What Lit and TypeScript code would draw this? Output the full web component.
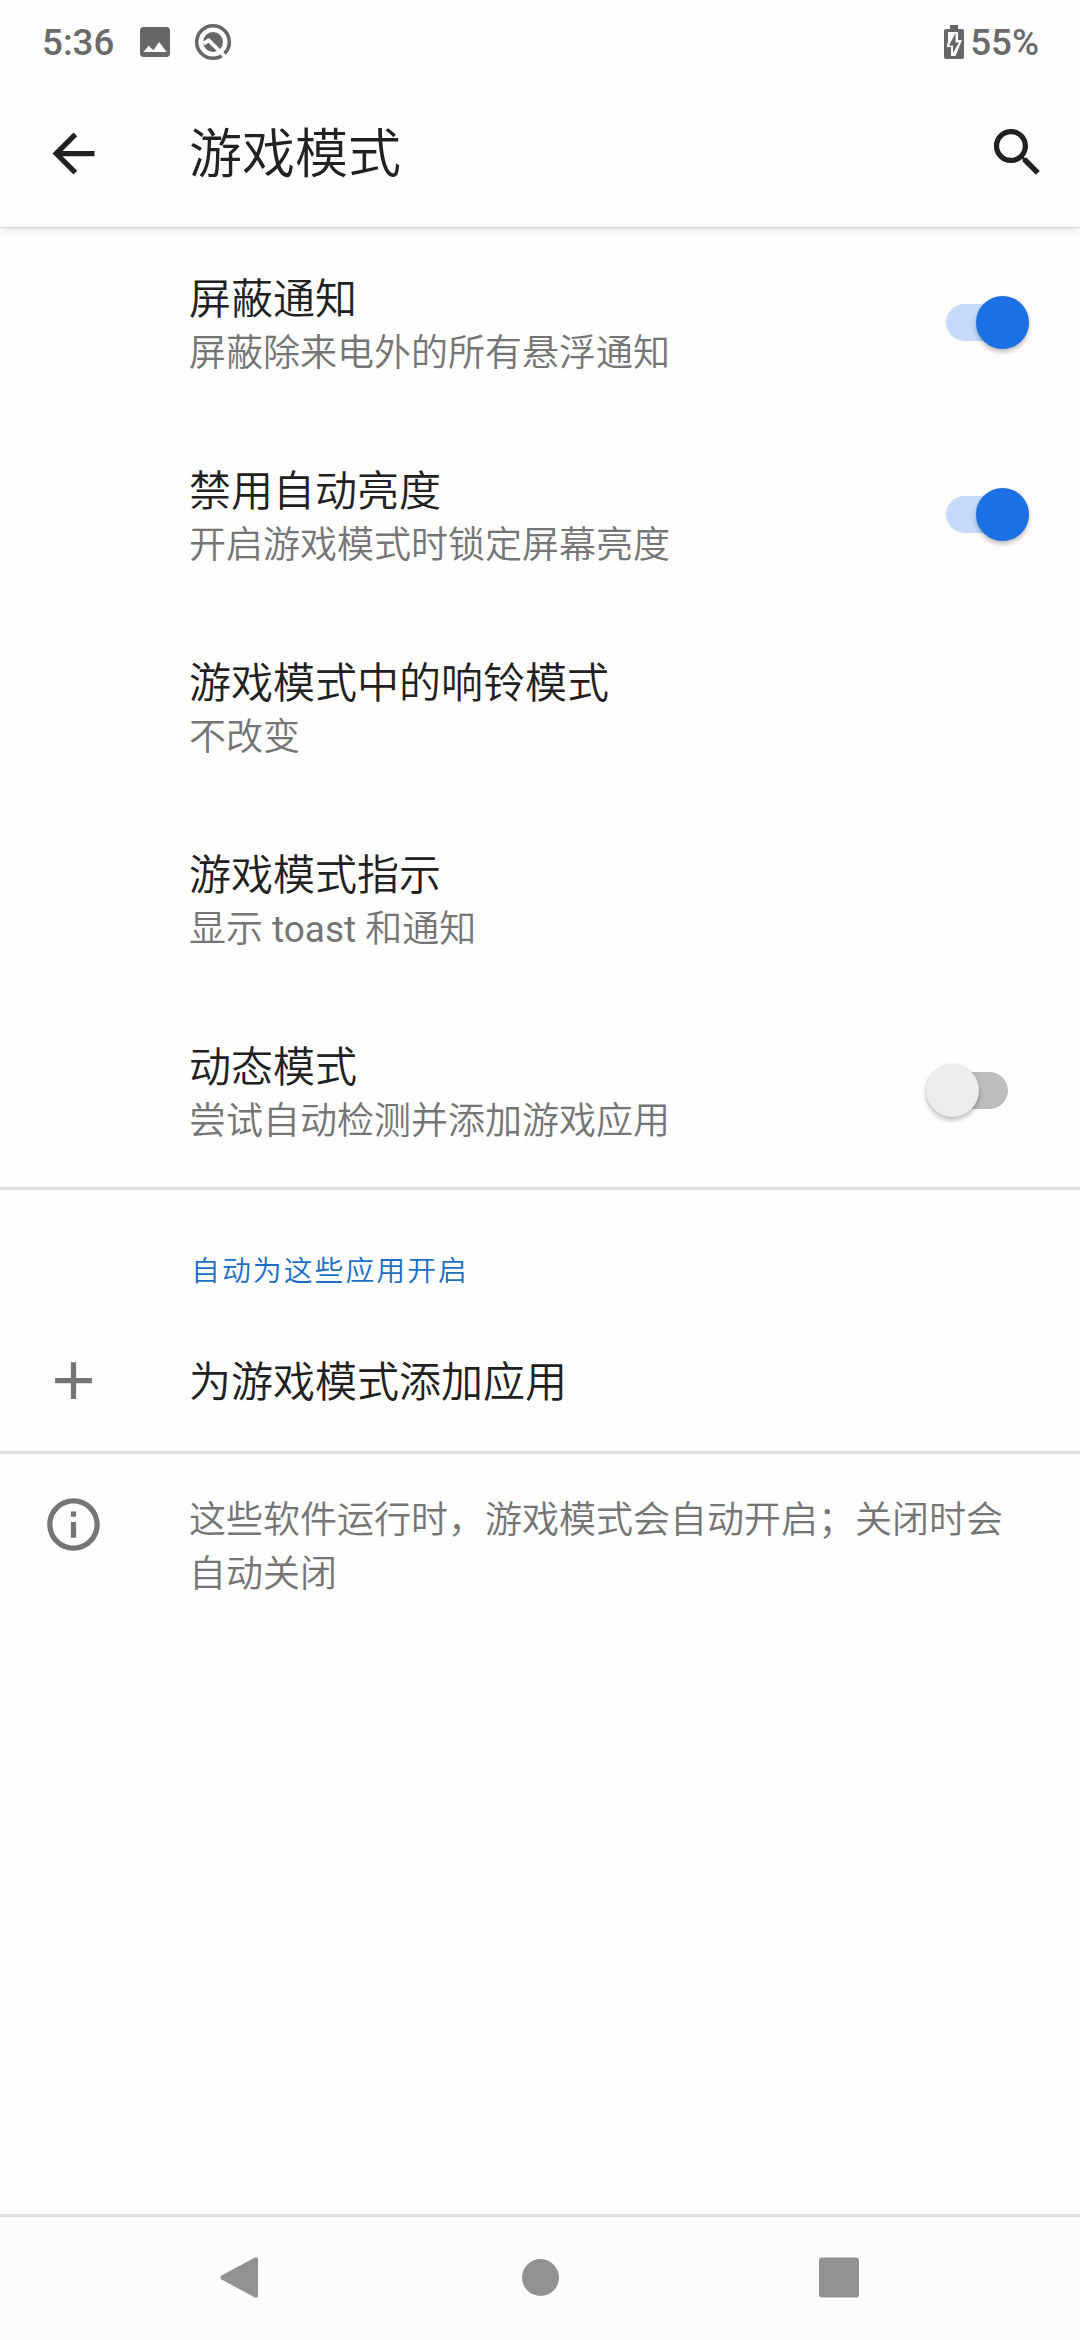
import { LitElement, html, css, svg } from "lit";
import { customElement, property } from "lit/decorators.js";

const FONT = css`Roboto, "Noto Sans CJK SC", sans-serif`;

@customElement("toggle-switch")
class ToggleSwitch extends LitElement {
  @property({ type: Boolean, reflect: true }) on = false;

  static styles = css`
    :host {
      display: flex;
      align-items: center;
      justify-content: flex-start;
      width: 62px;
      height: 37px;
      margin-bottom: 2px;
      border-radius: 19px;
      background: #bdbdbd;
    }
    :host([on]) {
      background: #c6dafb;
      justify-content: flex-end;
    }
    .thumb {
      flex: none;
      width: 53px;
      height: 53px;
      border-radius: 50%;
      background: #ececec;
      margin: 0 -20.5px;
      box-shadow: 0 3px 5px rgba(0, 0, 0, 0.26), 0 0 2px rgba(0, 0, 0, 0.08);
    }
    :host([on]) .thumb {
      background: #1b70e5;
    }
  `;

  render() {
    return html`<span class="thumb"></span>`;
  }
}

@customElement("setting-row")
class SettingRow extends LitElement {
  @property() heading = "";
  @property() summary = "";
  @property() toggle = "";

  static styles = css`
    :host {
      display: flex;
      align-items: center;
      box-sizing: border-box;
      height: 192px;
      padding: 0 72px 0 189px;
      font-family: ${FONT};
      font-weight: 350;
    }
    .text {
      flex: 1;
      padding-top: 6px;
    }
    .heading {
      font-size: 42px;
      line-height: 54px;
      color: #212121;
    }
    .summary {
      font-size: 37px;
      line-height: 53px;
      color: #757575;
    }
    .latin {
      font-weight: 400;
    }
  `;

  render() {
    // Latin words are set one step heavier than the Chinese around them.
    const parts = this.summary.split(/([A-Za-z]+)/);
    return html`
      <div class="text">
        <div class="heading">${this.heading}</div>
        <div class="summary">${parts.map((p, i) => (i % 2 ? html`<span class="latin">${p}</span>` : p))}</div>
      </div>
      ${this.toggle ? html`<toggle-switch ?on=${this.toggle === "on"}></toggle-switch>` : ""}
    `;
  }
}

const rows = [
  { heading: "屏蔽通知", summary: "屏蔽除来电外的所有悬浮通知", toggle: "on" },
  { heading: "禁用自动亮度", summary: "开启游戏模式时锁定屏幕亮度", toggle: "on" },
  { heading: "游戏模式中的响铃模式", summary: "不改变", toggle: "" },
  { heading: "游戏模式指示", summary: "显示 toast 和通知", toggle: "" },
  { heading: "动态模式", summary: "尝试自动检测并添加游戏应用", toggle: "off" },
];

const icon = (d: string) => html`<svg class="icon" viewBox="0 0 24 24">${svg`<path d=${d} />`}</svg>`;

const BACK = "M20 11H7.83l5.59-5.59L12 4l-8 8 8 8 1.41-1.41L7.83 13H20v-2z";
const SEARCH =
  "M15.5 14h-.79l-.28-.27C15.41 12.59 16 11.11 16 9.5 16 5.91 13.09 3 9.5 3S3 5.91 3 9.5 5.91 16 9.5 16c1.61 0 3.09-.59 4.23-1.57l.27.28v.79l5 4.99L20.49 19l-4.99-5zm-6 0C7.01 14 5 11.99 5 9.5S7.01 5 9.5 5 14 7.01 14 9.5 11.99 14 9.5 14z";
const PLUS = "M19 13h-6v6h-2v-6H5v-2h6V5h2v6h6v2z";
const INFO =
  "M11 17h2v-6h-2v6zm1-15C6.48 2 2 6.48 2 12s4.48 10 10 10 10-4.48 10-10S17.52 2 12 2zm0 18c-4.41 0-8-3.59-8-8s3.59-8 8-8 8 3.59 8 8-3.59 8-8 8zM11 9h2V7h-2v2z";

@customElement("app-root")
class AppRoot extends LitElement {
  static styles = css`
    :host {
      display: flex;
      flex-direction: column;
      width: 1080px;
      height: 2340px;
      overflow: hidden;
      background: #fefefe;
      font-family: ${FONT};
      font-weight: 350;
      color: #212121;
    }
    .icon {
      display: block;
      flex: none;
      width: 63px;
      height: 63px;
      fill: currentColor;
    }
    .header {
      height: 227px;
      flex: none;
      box-shadow: 0 1px 1px rgba(0, 0, 0, 0.1), 0 3px 10px rgba(0, 0, 0, 0.1);
    }
    .status {
      display: flex;
      align-items: center;
      box-sizing: border-box;
      height: 84px;
      padding: 0 41px 0 42px;
      font-size: 36.75px;
      font-weight: 500;
      line-height: 43px;
      color: #6a6a6a;
    }
    .photo {
      width: 30px;
      height: 30px;
      margin-left: 26px;
    }
    .quick {
      width: 38px;
      height: 38px;
      margin-left: 24px;
    }
    .spacer {
      flex: 1;
    }
    .battery {
      width: 20px;
      height: 34px;
      margin-right: 6px;
    }
    .appbar {
      display: flex;
      align-items: center;
      box-sizing: border-box;
      height: 138px;
      padding: 0 31px 0 42px;
    }
    .search {
      padding-bottom: 2px;
    }
    .title {
      flex: 1;
      padding: 3px 0 0 84px;
      font-size: 53px;
      line-height: 66px;
    }
    .divider {
      flex: none;
      height: 3px;
      background: #e0e0e0;
    }
    .category {
      box-sizing: border-box;
      height: 120px;
      padding: 59px 0 0 191px;
      font-size: 28.875px;
      line-height: 44px;
      letter-spacing: 2.02px;
      color: #1a6fc4;
    }
    .add {
      display: flex;
      align-items: center;
      gap: 84px;
      box-sizing: border-box;
      height: 141px;
      padding-left: 42px;
      font-size: 42px;
      line-height: 54px;
    }
    .label {
      padding-top: 4px;
    }
    .gray {
      color: #757575;
    }
    .footer {
      display: flex;
      gap: 84px;
      padding: 39px 63px 0 42px;
      color: #757575;
      font-size: 37px;
      line-height: 54px;
    }
    .note {
      width: 828px;
      padding-top: 1px;
    }
    .nav {
      display: flex;
      box-sizing: border-box;
      height: 126px;
      padding-bottom: 2px;
      border-top: 3px solid #e0e0e0;
      background: #fcfcfc;
      align-items: center;
      justify-content: center;
      gap: 236px;
    }
    .nav svg {
      width: 63px;
      height: 63px;
      fill: #929292;
    }
  `;

  render() {
    return html`
      <div class="header">
        <div class="status">
          <span>5:36</span>
          <svg class="photo" viewBox="3 3 18 18" fill="#676767">
            <path d="M21 19V5c0-1.100-.9-2-2-2H5c-1.100 0-2 .9-2 2v14c0 1.100.9 2 2 2h14c1.100 0 2-.9 2-2zM8.500 14.500l2.500 2.500L14.500 12l4.500 6H5l3.500-4z" />
          </svg>
          <svg class="quick" viewBox="0 0 38 38">
            <circle cx="19" cy="19" r="16.300" fill="none" stroke="#676767" stroke-width="3.600" />
            <circle cx="19" cy="19" r="10" fill="#676767" />
            <path d="M9.500 20.500L14.800 17.300L31.500 34" fill="none" stroke="#fefefe" stroke-width="3.800" />
          </svg>
          <span class="spacer"></span>
          <svg class="battery" viewBox="0 0 20 34">
            <path d="M6 0h8v4h4q2 0 2 2v26q0 2-2 2H2q-2 0-2-2V6q0-2 2-2h4z" fill="#676767" />
            <path d="M4 7h10v8h4L11.500 31H7V22H3V19.500l1-2z" fill="#fefefe" />
            <path d="M11.500 8v9.500H15L9 28V20.500H5z" fill="#676767" />
          </svg>
          <span>55%</span>
        </div>
        <div class="appbar">
          ${icon(BACK)}
          <div class="title">游戏模式</div>
          <div class="search">${icon(SEARCH)}</div>
        </div>
      </div>
      ${rows.map(
        (r) => html`<setting-row heading=${r.heading} summary=${r.summary} toggle=${r.toggle}></setting-row>`
      )}
      <div class="divider"></div>
      <div class="category">自动为这些应用开启</div>
      <div class="add"><span class="gray">${icon(PLUS)}</span><span class="label">为游戏模式添加应用</span></div>
      <div class="divider"></div>
      <div class="footer">
        ${icon(INFO)}
        <div class="note">这些软件运行时，游戏模式会自动开启；关闭时会自动关闭</div>
      </div>
      <div class="spacer"></div>
      <div class="nav">
        <svg viewBox="0 0 63 63"><path d="M11.500 29.500L45 11.500q3-1 3 2v36q0 3-3 2L11.500 33.500q-2-2 0-4z" /></svg>
        <svg viewBox="0 0 63 63"><circle cx="31.500" cy="31.500" r="18.500" /></svg>
        <svg viewBox="0 0 63 63"><rect x="11" y="11.500" width="40" height="40" rx="3" /></svg>
      </div>
    `;
  }
}
